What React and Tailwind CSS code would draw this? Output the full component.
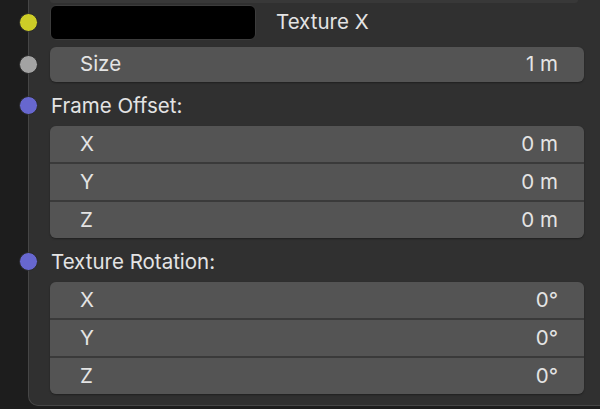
const FONT = { fontFamily: 'Inter, "Noto Sans", sans-serif' };

const Socket = ({ color, top }) => (
  <span
    className={`absolute left-[-10px] z-10 h-[19px] w-[19px] rounded-full border border-[#2a2a2a] ${color}`}
    style={{ top }}
  />
);

const GroupRow = ({ label, value, first, last }) => (
  <div
    className={`flex h-[36px] items-center justify-between bg-[#545454] pl-[30px] pr-[26px] ${first ? 'rounded-t-[6px]' : ''} ${last ? 'rounded-b-[6px]' : ''}`}
  >
    <span>{label}</span>
    <span>{value}</span>
  </div>
);

const Group = ({ rows }) => (
  <div className="mr-[16px] flex flex-col gap-[2px] rounded-[6px] bg-[#3a3a3a] shadow-[0_1px_2px_rgba(0,0,0,0.35)]">
    {rows.map((r, i) => (
      <GroupRow key={r[0]} label={r[0]} value={r[1]} first={i === 0} last={i === rows.length - 1} />
    ))}
  </div>
);

export default function App() {
  return (
    <div className="flex h-[409px] w-[600px] overflow-hidden bg-[#1d1d1d] text-[20.5px] text-[#e4e4e4]" style={FONT}>
      <div className="relative ml-[28px] h-[406px] flex-1 rounded-bl-[10px] border-b border-l border-[#464646] bg-[#303030]">
        <Socket color="bg-[#cdcd27]" top={13} />
        <Socket color="bg-[#a3a3a3]" top={55} />
        <Socket color="bg-[#6767cf]" top={96} />
        <Socket color="bg-[#6767cf]" top={252} />

        <div className="flex flex-col pl-[21px]">
          <div className="mr-[22px] h-[3px] rounded-b-[6px] bg-[#383838]" />
          <div className="mt-[2px] flex h-[35px] items-center">
            <div className="h-[35px] w-[206px] rounded-[6px] border border-[#3c3c3c] bg-black" />
            <span className="ml-[20px]">Texture X</span>
          </div>

          <div className="mr-[16px] mt-[7px] flex h-[35px] items-center justify-between rounded-[6px] bg-[#545454] pl-[30px] pr-[26px] shadow-[0_1px_2px_rgba(0,0,0,0.35)]">
            <span>Size</span>
            <span>1 m</span>
          </div>

          <div className="mt-[6px] flex h-[36px] items-center pl-px">Frame Offset:</div>
          <div className="mt-[2px]">
            <Group rows={[['X', '0 m'], ['Y', '0 m'], ['Z', '0 m']]} />
          </div>

          <div className="mt-[6px] flex h-[36px] items-center pl-px">Texture Rotation:</div>
          <div className="mt-[2px]">
            <Group rows={[['X', '0°'], ['Y', '0°'], ['Z', '0°']]} />
          </div>
        </div>
      </div>
    </div>
  );
}
